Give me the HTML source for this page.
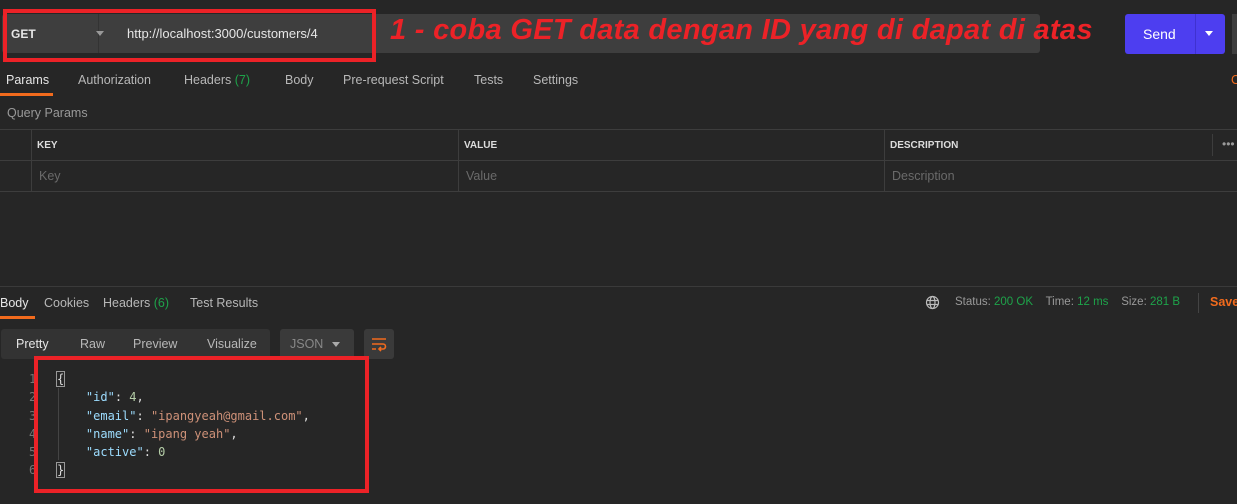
<!DOCTYPE html><html><head><style>
body{margin:0;width:1237px;height:504px;background:#262626;font-family:"Liberation Sans",sans-serif;position:relative;overflow:hidden;color:#ccc}
.a{position:absolute}
.t{font-size:12.5px;color:#b8b8b8}
.mono{font-family:"DejaVu Sans Mono","Liberation Mono",monospace;font-size:12px}
</style></head><body>
<div class="a" style="left:2px;top:14px;width:1038px;height:39px;background:#3e3e3e;border-radius:3px"></div>
<div class="a" style="left:7px;top:14px;width:91px;height:39px;border-right:1px solid #333"></div>
<div class="a" style="left:11px;top:27px;font-size:12px;color:#e6e6e6;font-weight:bold">GET</div>
<div class="a" style="left:96px;top:31px;border:4px solid transparent;border-top:5px solid #999"></div>
<div class="a" style="left:127px;top:26px;font-size:13px;color:#e6e6e6">http://localhost:3000/customers/4</div>
<div class="a" style="left:3px;top:9px;width:365px;height:45px;border:4px solid #ec2227"></div>
<div class="a" style="left:390px;top:14px;font-size:29px;font-weight:bold;font-style:italic;color:#ec2227;letter-spacing:0.3px">1 - coba GET data dengan ID yang di dapat di atas</div>
<div class="a" style="left:1125px;top:14px;width:100px;height:40px;background:#4d3ef0;border-radius:3px"></div>
<div class="a" style="left:1195px;top:14px;width:1px;height:40px;background:#3f31d0"></div>
<div class="a" style="left:1143px;top:26px;font-size:14px;color:#fff">Send</div>
<div class="a" style="left:1205px;top:31px;border:4px solid transparent;border-top:5px solid #fff"></div>
<div class="a" style="left:1232px;top:14px;width:6px;height:40px;background:#3e3e3e"></div>
<div class="a t" style="left:6px;top:73px;color:#e6e6e6">Params</div>
<div class="a" style="left:0;top:93px;width:53px;height:3px;background:#f26b1d"></div>
<div class="a t" style="left:78px;top:73px">Authorization</div>
<div class="a t" style="left:184px;top:73px">Headers <span style="color:#1ea34a">(7)</span></div>
<div class="a t" style="left:285px;top:73px">Body</div>
<div class="a t" style="left:343px;top:73px">Pre-request Script</div>
<div class="a t" style="left:474px;top:73px">Tests</div>
<div class="a t" style="left:533px;top:73px">Settings</div>
<div class="a t" style="left:1231px;top:73px;color:#f26b1d">C</div>
<div class="a t" style="left:7px;top:106px;color:#999">Query Params</div>
<div class="a" style="left:0;top:129px;width:1237px;height:1px;background:#3d3d3d"></div>
<div class="a" style="left:0;top:160px;width:1237px;height:1px;background:#3d3d3d"></div>
<div class="a" style="left:0;top:191px;width:1237px;height:1px;background:#3d3d3d"></div>
<div class="a" style="left:31px;top:129px;width:1px;height:62px;background:#3d3d3d"></div>
<div class="a" style="left:458px;top:129px;width:1px;height:62px;background:#3d3d3d"></div>
<div class="a" style="left:884px;top:129px;width:1px;height:62px;background:#3d3d3d"></div>
<div class="a" style="left:1212px;top:134px;width:1px;height:22px;background:#3d3d3d"></div>
<div class="a" style="left:37px;top:140px;font-size:10px;font-weight:bold;color:#ddd">KEY</div>
<div class="a" style="left:464px;top:140px;font-size:10px;font-weight:bold;color:#ddd">VALUE</div>
<div class="a" style="left:890px;top:140px;font-size:10px;font-weight:bold;color:#ddd">DESCRIPTION</div>
<div class="a" style="left:1222px;top:137px;font-size:12px;color:#999">•••</div>
<div class="a t" style="left:39px;top:169px;color:#6a6a6a">Key</div>
<div class="a t" style="left:466px;top:169px;color:#6a6a6a">Value</div>
<div class="a t" style="left:892px;top:169px;color:#6a6a6a">Description</div>
<div class="a" style="left:0;top:286px;width:1237px;height:1px;background:#3a3a3a"></div>
<div class="a t" style="left:0;top:296px;color:#e6e6e6">Body</div>
<div class="a" style="left:0;top:316px;width:35px;height:3px;background:#f26b1d"></div>
<div class="a t" style="left:44px;top:296px">Cookies</div>
<div class="a t" style="left:103px;top:296px">Headers <span style="color:#1ea34a">(6)</span></div>
<div class="a t" style="left:190px;top:296px">Test Results</div>
<svg class="a" style="left:925px;top:295px" width="15" height="15" viewBox="0 0 15 15" fill="none" stroke="#bbb" stroke-width="1.2"><circle cx="7.5" cy="7.5" r="6"/><ellipse cx="7.5" cy="7.5" rx="2.5" ry="6"/><path d="M1.5 5.5h12M1.5 9.5h12"/></svg>
<div class="a" style="left:955px;top:296px;font-size:11.5px;color:#999">Status: <span style="color:#1ea34a">200 OK</span>&nbsp;&nbsp;&nbsp; Time: <span style="color:#1ea34a">12 ms</span>&nbsp;&nbsp;&nbsp; Size: <span style="color:#1ea34a">281 B</span></div>
<div class="a" style="left:1198px;top:293px;width:1px;height:20px;background:#444"></div>
<div class="a" style="left:1210px;top:295px;font-size:12.5px;color:#f26b1d;font-weight:bold">Save</div>
<div class="a" style="left:1px;top:329px;width:269px;height:30px;background:#333;border-radius:3px"></div>
<div class="a t" style="left:16px;top:337px;color:#e6e6e6">Pretty</div>
<div class="a t" style="left:80px;top:337px">Raw</div>
<div class="a t" style="left:133px;top:337px">Preview</div>
<div class="a t" style="left:207px;top:337px">Visualize</div>
<div class="a" style="left:280px;top:329px;width:74px;height:30px;background:#3a3a3a;border-radius:3px"></div>
<div class="a t" style="left:290px;top:337px;color:#888">JSON</div>
<div class="a" style="left:332px;top:342px;border:4px solid transparent;border-top:5px solid #aaa"></div>
<div class="a" style="left:364px;top:329px;width:30px;height:30px;background:#3a3a3a;border-radius:3px"></div>
<svg class="a" style="left:371px;top:336px" width="16" height="16" viewBox="0 0 16 16" fill="none" stroke="#f26b1d" stroke-width="1.6"><path d="M1 3h14M1 8h11a2.5 2.5 0 0 1 0 5H8M10 11l-2 2 2 2M1 13h4"/></svg>
<div class="a mono" style="left:29px;top:370px;line-height:18.3px;color:#777">1<br>2<br>3<br>4<br>5<br>6</div>
<div class="a" style="left:58px;top:388px;width:1px;height:72px;background:#444"></div>
<div class="a mono" style="left:57px;top:370px;line-height:18.3px;color:#ddd;white-space:pre"><span style="outline:1px solid #999">{</span>
    <span style="color:#9cdcfe">"id"</span>: <span style="color:#b5cea8">4</span>,
    <span style="color:#9cdcfe">"email"</span>: <span style="color:#ce9178">"ipangyeah@gmail.com"</span>,
    <span style="color:#9cdcfe">"name"</span>: <span style="color:#ce9178">"ipang yeah"</span>,
    <span style="color:#9cdcfe">"active"</span>: <span style="color:#b5cea8">0</span>
<span style="outline:1px solid #999">}</span></div>
<div class="a" style="left:34px;top:356px;width:327px;height:129px;border:4px solid #ec2227"></div>
</body></html>
